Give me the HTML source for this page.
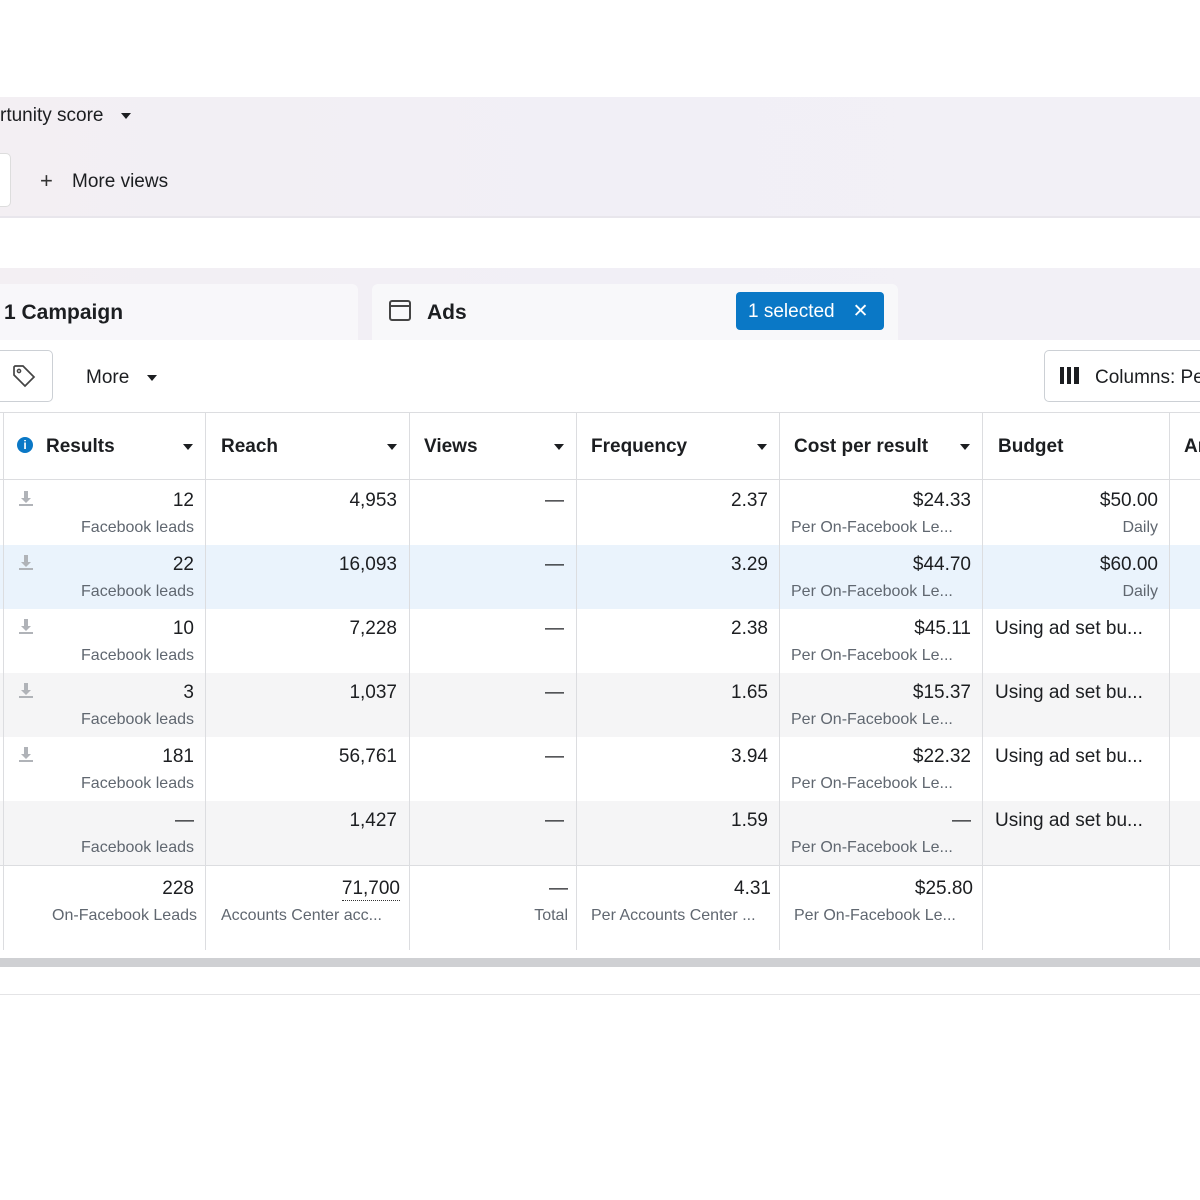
<!DOCTYPE html>
<html><head><style>
body{margin:0;width:1200px;height:1200px;background:#fff;font-family:"Liberation Sans",sans-serif;color:#1c1e21;position:relative;overflow:hidden}
.a{position:absolute;white-space:nowrap}
.band{background:linear-gradient(90deg,#f3eff3,#f1eff6 50%,#f2f0f6)}
.h{font-size:19px;font-weight:bold;color:#1c1e21}
.c{position:absolute;font-size:19px;text-align:right;white-space:nowrap}
.s{position:absolute;font-size:16px;color:#606770;text-align:right;white-space:nowrap}
.vl{position:absolute;top:413px;height:537px;width:1px;background:#dcdde0}
.tri{display:inline-block;width:0;height:0;border-left:5px solid transparent;border-right:5px solid transparent;border-top:6px solid #1c1e21}
</style></head><body>
<div class="a band" style="left:0;top:97px;width:1200px;height:120px"></div>
<div class="a" style="left:0;top:216px;width:1200px;height:2px;background:#e8e6ec"></div>
<div class="a" style="left:0;top:105px;font-size:19px">rtunity score <span class="tri" style="margin-left:12px;vertical-align:middle"></span></div>
<div class="a" style="left:-6px;top:153px;width:15px;height:52px;background:#fff;border:1px solid #ddd;border-radius:5px"></div>
<div class="a" style="left:40px;top:168px;font-size:22px;color:#333">+</div>
<div class="a" style="left:72px;top:171px;font-size:19px">More views</div>

<div class="a band" style="left:0;top:268px;width:1200px;height:72px"></div>
<div class="a" style="left:0;top:284px;width:358px;height:56px;background:#f8f7fa;border-radius:0 6px 0 0"></div>
<div class="a" style="left:372px;top:284px;width:526px;height:56px;background:#f8f8fa;border-radius:6px 6px 0 0"></div>
<div class="a h" style="left:4px;top:301px;font-size:21px">1 Campaign</div>
<div class="a" style="left:389px;top:300px;width:22px;height:21px;border:2px solid #444;border-radius:3px;box-sizing:border-box"></div>
<div class="a" style="left:389px;top:305px;width:22px;height:2px;background:#444"></div>
<div class="a h" style="left:427px;top:301px;font-size:21px">Ads</div>
<div class="a" style="left:736px;top:292px;width:148px;height:38px;background:#0a78c6;border-radius:4px;color:#fff;font-size:19px;line-height:40px"><span style="margin-left:12px">1 selected</span><span style="margin-left:18px">✕</span></div>

<div class="a" style="left:-6px;top:350px;width:57px;height:50px;border:1px solid #ccd0d5;border-radius:5px;background:#fff"></div>
<svg class="a" style="left:12px;top:364px" width="24" height="24" viewBox="0 0 24 24"><path d="M2 3v8l11 11 9-9L11 2H3z" fill="none" stroke="#444" stroke-width="1.7"/><circle cx="7" cy="7" r="1.6" fill="none" stroke="#444" stroke-width="1.5"/></svg>
<div class="a" style="left:86px;top:367px;font-size:19px">More <span class="tri" style="margin-left:12px;vertical-align:middle"></span></div>
<div class="a" style="left:1044px;top:350px;width:170px;height:50px;border:1px solid #ccd0d5;border-radius:5px"></div>
<div class="a" style="left:1060px;top:367px;width:4px;height:17px;background:#1c1e21"></div>
<div class="a" style="left:1067px;top:367px;width:4px;height:17px;background:#1c1e21"></div>
<div class="a" style="left:1074px;top:367px;width:5px;height:17px;background:#1c1e21"></div>
<div class="a" style="left:1095px;top:367px;font-size:19px">Columns: Pe</div>

<div class="a" style="left:0;top:412px;width:1200px;height:1px;background:#dcdde0"></div>
<div class="a" style="left:0;top:479px;width:1200px;height:1px;background:#dcdde0"></div>
<div class="a" style="left:0;top:545px;width:1200px;height:64px;background:#eaf3fc"></div>
<div class="a" style="left:0;top:673px;width:1200px;height:64px;background:#f5f5f6"></div>
<div class="a" style="left:0;top:801px;width:1200px;height:64px;background:#f5f5f6"></div>
<div class="a" style="left:0;top:865px;width:1200px;height:1px;background:#dcdde0"></div>
<div class="vl" style="left:3px"></div><div class="vl" style="left:205px"></div><div class="vl" style="left:409px"></div><div class="vl" style="left:576px"></div><div class="vl" style="left:779px"></div><div class="vl" style="left:982px"></div><div class="vl" style="left:1169px"></div>
<div class="a" style="left:0;top:958px;width:1200px;height:9px;background:#cfd0d3"></div>
<div class="a" style="left:0;top:994px;width:1200px;height:1px;background:#e4e4e6"></div>

<div class="a" style="left:17px;top:437px;width:16px;height:16px;border-radius:50%;background:#0a78c6;color:#fff;font-size:12px;font-weight:bold;text-align:center;line-height:16px">i</div>
<div class="a h" style="left:46px;top:436px">Results</div><span class="a tri" style="left:183px;top:444px"></span>
<div class="a h" style="left:221px;top:436px">Reach</div><span class="a tri" style="left:387px;top:444px"></span>
<div class="a h" style="left:424px;top:436px">Views</div><span class="a tri" style="left:554px;top:444px"></span>
<div class="a h" style="left:591px;top:436px">Frequency</div><span class="a tri" style="left:757px;top:444px"></span>
<div class="a h" style="left:794px;top:436px">Cost per result</div><span class="a tri" style="left:960px;top:444px"></span>
<div class="a h" style="left:998px;top:436px">Budget</div>
<div class="a h" style="left:1184px;top:436px">Ar</div>

<div id="rows"></div>
<script>
var R=[["12","4,953","2.37","$24.33","$50.00","Daily"],["22","16,093","3.29","$44.70","$60.00","Daily"],["10","7,228","2.38","$45.11","U",""],["3","1,037","1.65","$15.37","U",""],["181","56,761","3.94","$22.32","U",""],["—","1,427","1.59","—","U",""]];
var h="";
R.forEach(function(r,i){var y=490+i*64;
if(i<5)h+='<svg class="a" style="left:18px;top:'+y+'px" width="16" height="18" viewBox="0 0 16 18"><path d="M6 1h4v7h3l-5 5-5-5h3z" fill="#b0b3b8"/><path d="M1 15h14" stroke="#b0b3b8" stroke-width="2"/></svg>';
h+='<div class="c" style="right:1006px;top:'+y+'px">'+r[0]+'</div><div class="s" style="right:1006px;top:'+(y+29)+'px">Facebook leads</div>';
h+='<div class="c" style="right:803px;top:'+y+'px">'+r[1]+'</div>';
h+='<div class="c" style="right:636px;top:'+y+'px">—</div>';
h+='<div class="c" style="right:432px;top:'+y+'px">'+r[2]+'</div>';
h+='<div class="c" style="right:229px;top:'+y+'px">'+r[3]+'</div><div class="s" style="left:791px;text-align:left;top:'+(y+29)+'px">Per On-Facebook Le...</div>';
if(r[4]=="U")h+='<div class="c" style="left:995px;text-align:left;top:'+y+'px">Using ad set bu...</div>';
else h+='<div class="c" style="right:42px;top:'+y+'px">'+r[4]+'</div><div class="s" style="right:42px;top:'+(y+29)+'px">'+r[5]+'</div>';
});
var y=878;
h+='<div class="c" style="right:1006px;top:'+y+'px">228</div><div class="s" style="right:1003px;top:'+(y+29)+'px">On-Facebook Leads</div>';
h+='<div class="c" style="right:800px;top:'+y+'px;border-bottom:1px dotted #333">71,700</div><div class="s" style="left:221px;text-align:left;top:'+(y+29)+'px">Accounts Center acc...</div>';
h+='<div class="c" style="right:632px;top:'+y+'px">—</div><div class="s" style="right:632px;top:'+(y+29)+'px">Total</div>';
h+='<div class="c" style="right:429px;top:'+y+'px">4.31</div><div class="s" style="left:591px;text-align:left;top:'+(y+29)+'px">Per Accounts Center ...</div>';
h+='<div class="c" style="right:227px;top:'+y+'px">$25.80</div><div class="s" style="left:794px;text-align:left;top:'+(y+29)+'px">Per On-Facebook Le...</div>';
document.getElementById("rows").innerHTML=h;
</script>
</body></html>
